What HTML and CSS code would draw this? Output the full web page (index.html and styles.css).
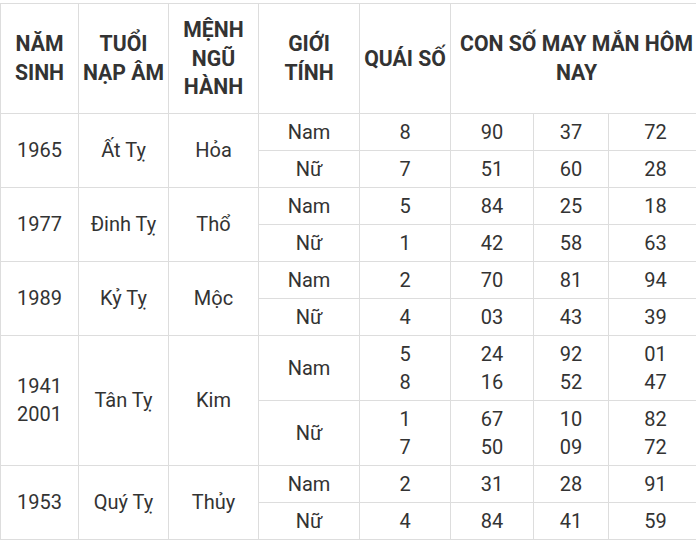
FILE: index.html
```html
<!DOCTYPE html>
<html lang="vi">
<head>
<meta charset="utf-8">
<link rel="stylesheet" href="styles.css">
</head>
<body>
<div class="wrap">
<table class="lucky">
<colgroup>
<col class="c1"><col class="c2"><col class="c3"><col class="c4"><col class="c5"><col class="c6"><col class="c7"><col class="c8">
</colgroup>
<thead>
<tr>
<th>NĂM<br>SINH</th>
<th>TUỔI<br>NẠP ÂM</th>
<th>MỆNH<br>NGŨ<br>HÀNH</th>
<th>GIỚI<br>TÍNH</th>
<th class="nw">QUÁI SỐ</th>
<th colspan="3">CON SỐ MAY MẮN HÔM<br>NAY</th>
</tr>
</thead>
<tbody>
<tr><td rowspan="2">1965</td><td rowspan="2">Ất Tỵ</td><td rowspan="2">Hỏa</td><td>Nam</td><td>8</td><td>90</td><td>37</td><td>72</td></tr>
<tr><td>Nữ</td><td>7</td><td>51</td><td>60</td><td>28</td></tr>
<tr><td rowspan="2">1977</td><td rowspan="2">Đinh Tỵ</td><td rowspan="2">Thổ</td><td>Nam</td><td>5</td><td>84</td><td>25</td><td>18</td></tr>
<tr><td>Nữ</td><td>1</td><td>42</td><td>58</td><td>63</td></tr>
<tr><td rowspan="2">1989</td><td rowspan="2">Kỷ Tỵ</td><td rowspan="2">Mộc</td><td>Nam</td><td>2</td><td>70</td><td>81</td><td>94</td></tr>
<tr><td>Nữ</td><td>4</td><td>03</td><td>43</td><td>39</td></tr>
<tr><td rowspan="2">1941<br>2001</td><td rowspan="2">Tân Tỵ</td><td rowspan="2">Kim</td><td>Nam</td><td>5<br>8</td><td>24<br>16</td><td>92<br>52</td><td>01<br>47</td></tr>
<tr><td>Nữ</td><td>1<br>7</td><td>67<br>50</td><td>10<br>09</td><td>82<br>72</td></tr>
<tr><td rowspan="2">1953</td><td rowspan="2">Quý Tỵ</td><td rowspan="2">Thủy</td><td>Nam</td><td>2</td><td>31</td><td>28</td><td>91</td></tr>
<tr><td>Nữ</td><td>4</td><td>84</td><td>41</td><td>59</td></tr>
</tbody>
</table>
</div>
</body>
</html>
```
FILE: styles.css
```css
html, body {
  margin: 0;
  padding: 0;
  background: #fff;
  overflow: hidden;
}
.wrap {
  width: 696px;
  height: 543px;
  overflow: hidden;
  padding-top: 3px;
  box-sizing: border-box;
}
.lucky {
  border-collapse: collapse;
  table-layout: fixed;
  width: 702px;
  font-family: Roboto, "Noto Sans", sans-serif;
  font-size: 20px;
  line-height: 28px;
  color: #333;
}
.c1 { width: 78px; }
.c2 { width: 90px; }
.c3 { width: 90px; }
.c4 { width: 101px; }
.c5 { width: 91px; }
.c6 { width: 83px; }
.c7 { width: 75px; }
.c8 { width: 94px; }
.lucky th,
.lucky td {
  border: 1px solid #ddd;
  text-align: center;
  vertical-align: middle;
  padding: 4px 2px;
}
.lucky th {
  font-weight: 700;
  font-size: 21.2px;
  line-height: 28.6px;
  padding-top: 12px;
  padding-bottom: 11px;
}
.nw { white-space: nowrap; }
```
